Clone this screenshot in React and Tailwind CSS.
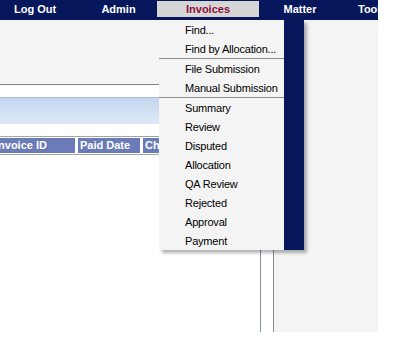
const menuGroups = [
  ['Find...', 'Find by Allocation...'],
  ['File Submission', 'Manual Submission'],
  ['Summary', 'Review', 'Disputed', 'Allocation', 'QA Review', 'Rejected', 'Approval', 'Payment'],
];

function NavDivider() {
  return <div className="mt-[2px] h-[15px] w-px bg-white" />;
}

export default function App() {
  return (
    <div className="relative h-[342px] w-[403px] overflow-hidden bg-white font-['Liberation_Sans',Arial,sans-serif] text-[11px] text-black">
      {/* top nav */}
      <nav className="flex h-[20px] w-[378px] items-start overflow-hidden bg-[#06175c] font-bold text-white">
        <div className="mt-[1px] h-[16px] w-[80px] shrink-0 pl-[14px] leading-[16px]">Log Out</div>
        <NavDivider />
        <div className="mt-[1px] h-[16px] w-[77px] shrink-0 text-center leading-[16px]">Admin</div>
        <div className="mt-[1px] h-[16px] w-[102px] shrink-0 bg-[#d6d6d6] text-center leading-[16px] text-[#8e0d3c]">Invoices</div>
        <div className="mt-[1px] h-[16px] w-[82px] shrink-0 text-center leading-[16px]">Matter</div>
        <NavDivider />
        <div className="mt-[1px] h-[16px] w-[80px] shrink-0 pl-[17px] leading-[16px]">Tools</div>
      </nav>

      <div className="flex h-[312px] w-[378px]">
        <div className="flex w-[261px] shrink-0 flex-col overflow-hidden border-r border-[#7f8eab]">
          <div className="h-[65px] shrink-0 border-b border-[#808080] bg-[#f4f4f4]" />
          <div className="h-[12px] shrink-0" />
          <div className="h-[27px] shrink-0 border-t border-[#a9bcd8] bg-gradient-to-b from-[#c4d7ef] to-[#dde8f6]" />
          <div className="h-[12px] shrink-0" />
          <div className="-ml-[7px] flex h-[19px] shrink-0 gap-[3px] border-y border-[#a3a3a3] py-px font-bold text-white">
            <div className="w-[82px] shrink-0 bg-[#6a7bb7] pl-[2px] leading-[15px]">Invoice ID</div>
            <div className="w-[62px] shrink-0 bg-[#6a7bb7] pl-[2px] leading-[15px]">Paid Date</div>
            <div className="w-[90px] shrink-0 bg-[#6a7bb7] pl-[2px] leading-[15px]">Charges</div>
          </div>
        </div>
        <div className="w-[12px] shrink-0" />
        <div className="h-[312px] flex-1 border-l border-[#8a8a8a] bg-[#f4f4f4]" />
      </div>

      {/* Invoices dropdown */}
      <div className="absolute left-[159px] top-[20px] flex h-[230px] w-[145px] shadow-[3px_3px_3px_rgba(0,0,0,0.3)]">
        <div className="w-[125px] bg-[#f4f4f4]">
          {menuGroups.map((group, gi) => (
            <div key={gi} className={gi > 0 ? 'border-t border-[#8c8c8c]' : ''}>
              {group.map((item) => (
                <div key={item} className="h-[19px] whitespace-nowrap pl-[26px] pt-px leading-[19px] tracking-[-0.2px]">
                  {item}
                </div>
              ))}
            </div>
          ))}
        </div>
        <div className="w-[20px] bg-[#06175c]" />
      </div>
    </div>
  );
}
